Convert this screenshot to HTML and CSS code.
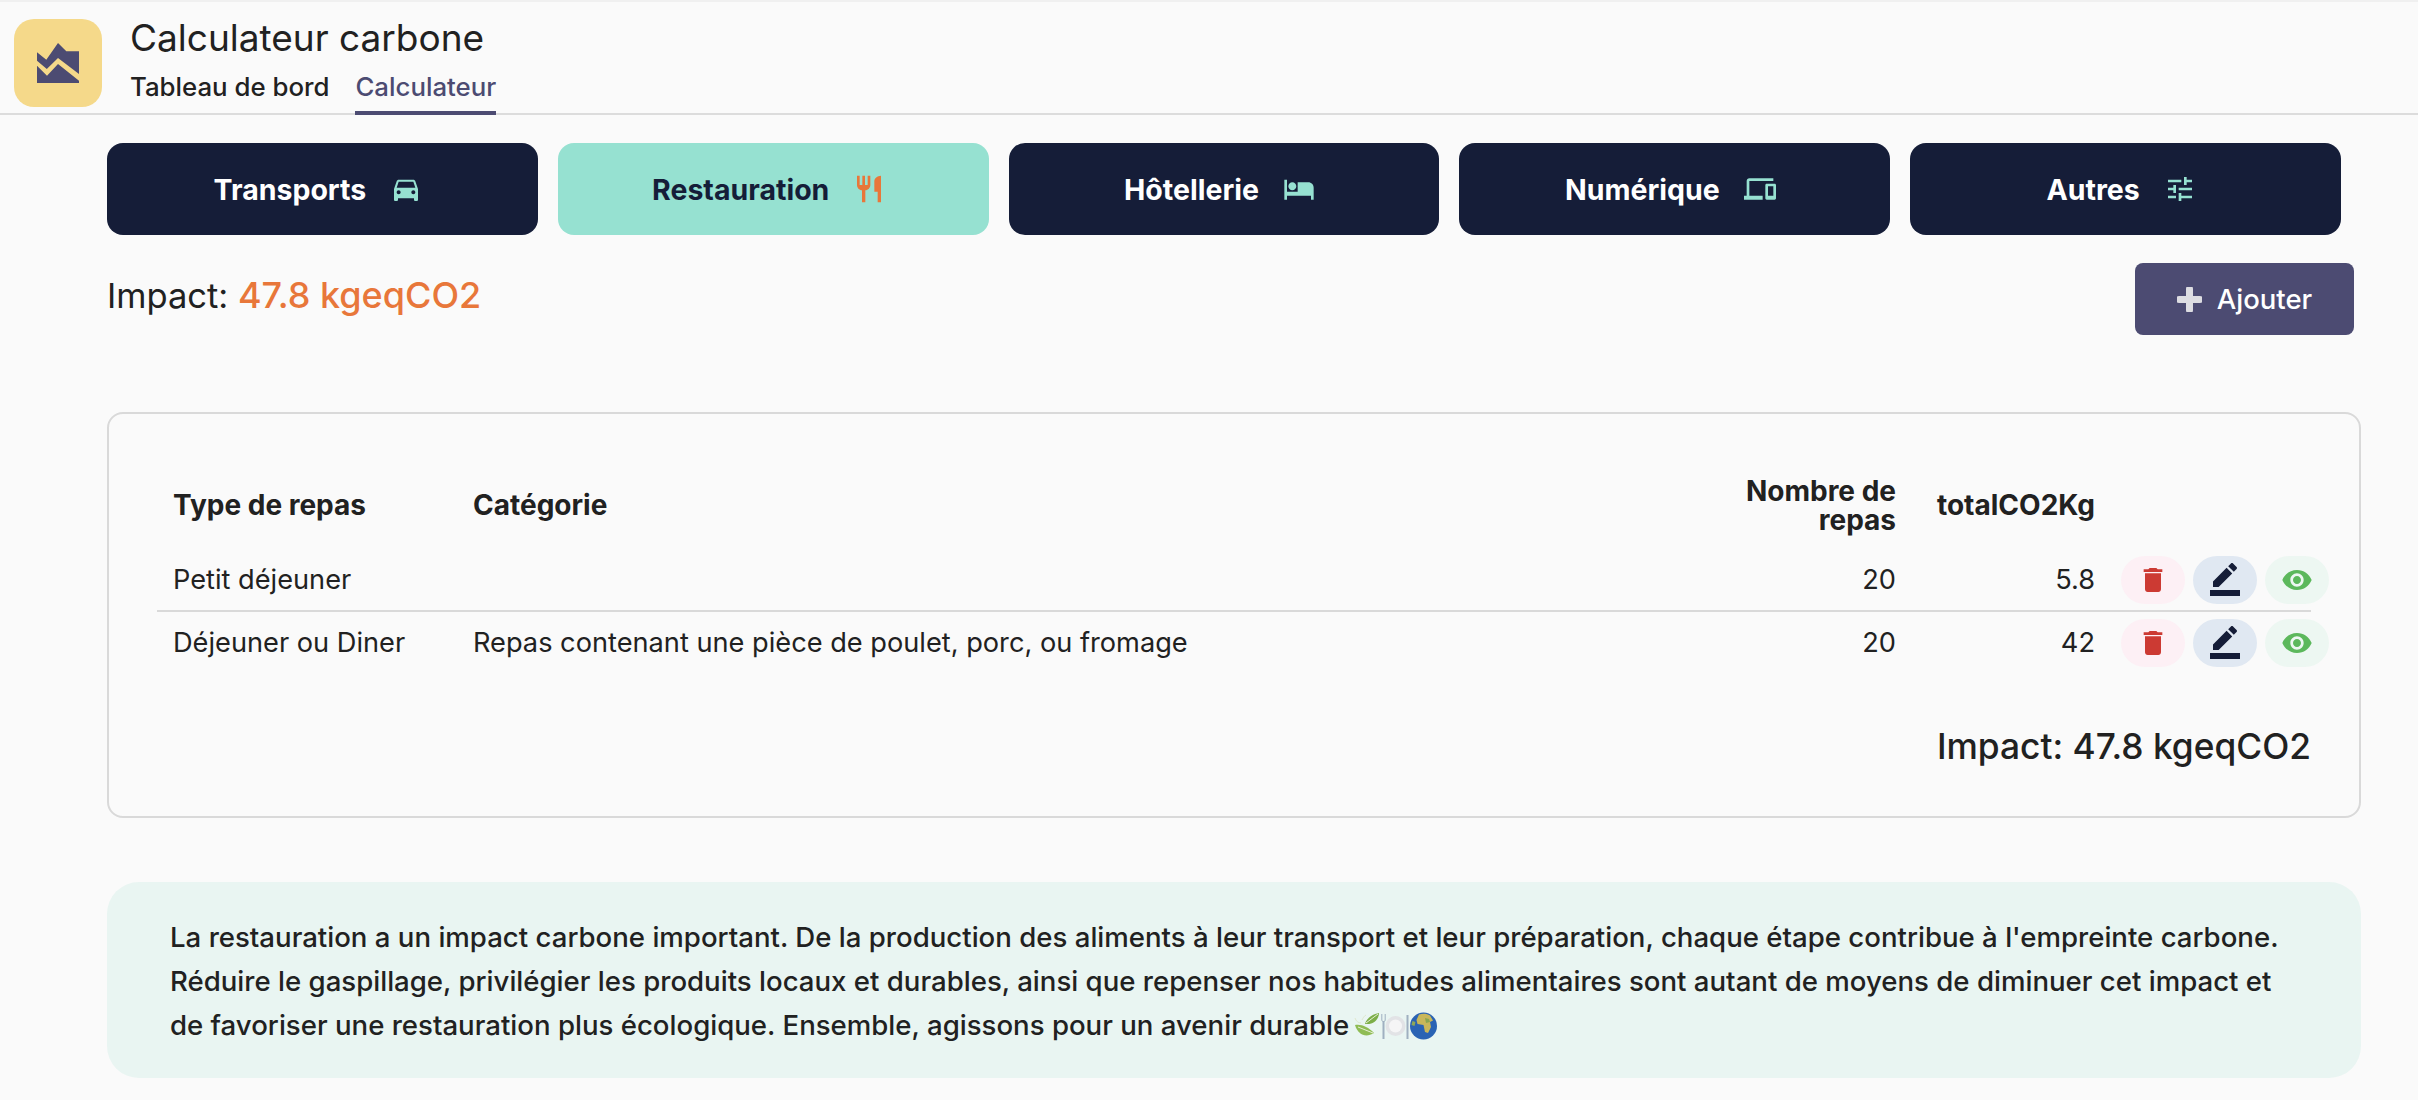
FILE: index.html
```html
<!DOCTYPE html>
<html lang="fr">
<head>
    <meta charset="UTF-8">
    <meta name="viewport" content="width=device-width, initial-scale=1.0">
    <title>Calculateur carbone</title>
    <link rel="stylesheet" href="styles.css">
</head>
<body>
    <header class="app-header">
        <div class="logo">
            <svg width="42" height="40" viewBox="0 0 42 40">
                <polygon class="logo-mark" points="0,9.300 9.300,16.700 21,0 29.300,8.300 42,8.300 42,31 21,15 9.800,26 0,17.700"/>
                <polygon class="logo-mark" points="0,22.700 10,32.700 21,21 42,37.700 42,40 0,40"/>
            </svg>
        </div>
        <div class="header-text">
            <h1>Calculateur carbone</h1>
            <nav class="header-nav">
                <a href="#">Tableau de bord</a>
                <a href="#" class="active">Calculateur</a>
            </nav>
        </div>
    </header>

    <main class="page">
        <div class="tabs">
            <button class="tab">Transports
                <svg class="tab-icon" viewBox="0 0 24 24"><path d="M18.92 6.01C18.72 5.42 18.16 5 17.5 5h-11c-.66 0-1.21.42-1.42 1.01L3 12v8c0 .55.45 1 1 1h1c.55 0 1-.45 1-1v-1h12v1c0 .55.45 1 1 1h1c.55 0 1-.45 1-1v-8l-2.08-5.99zM6.5 16c-.83 0-1.5-.67-1.5-1.5S5.67 13 6.5 13s1.5.67 1.5 1.5S7.33 16 6.5 16zm11 0c-.83 0-1.5-.67-1.5-1.5s.67-1.5 1.5-1.5 1.5.67 1.5 1.5-.67 1.5-1.5 1.5zM5 11l1.5-4.5h11L19 11H5z"/></svg>
            </button>
            <button class="tab active">Restauration
                <svg class="tab-icon" viewBox="0 0 24 24"><path d="M11 9H9V2H7v7H5V2H3v7c0 2.12 1.66 3.84 3.75 3.97V22h2.5v-9.03C11.34 12.84 13 11.12 13 9V2h-2v7zm5-3v8h2.5v8H21V2c-2.76 0-5 2.24-5 4z"/></svg>
            </button>
            <button class="tab">Hôtellerie
                <svg class="tab-icon" viewBox="0 0 24 24"><path d="M7 13c1.66 0 3-1.34 3-3S8.66 7 7 7s-3 1.34-3 3 1.34 3 3 3zm12-6h-8v7H3V5H1v15h2v-3h18v3h2v-9c0-2.21-1.79-4-4-4z"/></svg>
            </button>
            <button class="tab">Numérique
                <svg class="tab-icon" viewBox="0 0 24 24"><path d="M4 6h18V4H4c-1.1 0-2 .9-2 2v11H0v3h14v-3H4V6zm19 2h-6c-.55 0-1 .45-1 1v10c0 .55.45 1 1 1h6c.55 0 1-.45 1-1V9c0-.55-.45-1-1-1zm-1 9h-4v-7h4v7z"/></svg>
            </button>
            <button class="tab">Autres
                <svg class="tab-icon" viewBox="0 0 24 24"><path d="M3 17v2h6v-2H3zM3 5v2h10V5H3zm10 16v-2h8v-2h-8v-2h-2v6h2zM7 9v2H3v2h4v2h2V9H7zm14 4v-2H11v2h10zm-6-4h2V7h4V5h-4V3h-2v6z"/></svg>
            </button>
        </div>

        <div class="impact-row">
            <div class="impact">Impact: <span class="impact-value">47.8 kgeqCO2</span></div>
            <button class="add-btn">
                <svg width="25" height="25" viewBox="0 0 25 25"><path class="add-plus" d="M12.5 2v21M2 12.500h21"/></svg>
                Ajouter
            </button>
        </div>

        <section class="card">
            <table class="meals">
                <thead>
                    <tr>
                        <th class="col-type">Type de repas</th>
                        <th>Catégorie</th>
                        <th class="num col-count">Nombre de repas</th>
                        <th class="num col-total">totalCO2Kg</th>
                        <th class="col-actions"></th>
                    </tr>
                </thead>
                <tbody>
                    <tr>
                        <td>Petit déjeuner</td>
                        <td></td>
                        <td class="num">20</td>
                        <td class="num">5.8</td>
                        <td class="actions-cell">
                            <div class="actions">
                                <button class="icon-btn delete"><svg viewBox="0 0 24 24"><path d="M6 19c0 1.100.9 2 2 2h8c1.100 0 2-.9 2-2V7H6v12zM19 4h-3.500l-1-1h-5l-1 1H5v2h14V4z"/></svg></button>
                                <button class="icon-btn edit"><svg viewBox="0 0 24 24"><path d="M22 24H2v-4h20v4zM13.060 5.190l3.750 3.750L7.750 18H4v-3.750l9.060-9.060zm4.820 2.680-3.750-3.750 1.830-1.830c.39-.39 1.020-.39 1.410 0l2.340 2.340c.39.39.39 1.020 0 1.410l-1.830 1.830z"/></svg></button>
                                <button class="icon-btn view"><svg viewBox="0 0 24 24"><path d="M12 4.500C7 4.500 2.730 7.610 1 12c1.730 4.390 6 7.500 11 7.500s9.270-3.110 11-7.500c-1.730-4.390-6-7.500-11-7.500zM12 17c-2.760 0-5-2.240-5-5s2.240-5 5-5 5 2.240 5 5-2.240 5-5 5zm0-8c-1.660 0-3 1.340-3 3s1.340 3 3 3 3-1.340 3-3-1.340-3-3-3z"/></svg></button>
                            </div>
                        </td>
                    </tr>
                    <tr>
                        <td>Déjeuner ou Diner</td>
                        <td>Repas contenant une pièce de poulet, porc, ou fromage</td>
                        <td class="num">20</td>
                        <td class="num">42</td>
                        <td class="actions-cell">
                            <div class="actions">
                                <button class="icon-btn delete"><svg viewBox="0 0 24 24"><path d="M6 19c0 1.100.9 2 2 2h8c1.100 0 2-.9 2-2V7H6v12zM19 4h-3.500l-1-1h-5l-1 1H5v2h14V4z"/></svg></button>
                                <button class="icon-btn edit"><svg viewBox="0 0 24 24"><path d="M22 24H2v-4h20v4zM13.060 5.190l3.750 3.750L7.750 18H4v-3.750l9.060-9.060zm4.820 2.680-3.750-3.750 1.830-1.830c.39-.39 1.020-.39 1.410 0l2.340 2.340c.39.39.39 1.020 0 1.410l-1.830 1.830z"/></svg></button>
                                <button class="icon-btn view"><svg viewBox="0 0 24 24"><path d="M12 4.500C7 4.500 2.730 7.610 1 12c1.730 4.390 6 7.500 11 7.500s9.270-3.110 11-7.500c-1.730-4.390-6-7.500-11-7.500zM12 17c-2.760 0-5-2.240-5-5s2.240-5 5-5 5 2.240 5 5-2.240 5-5 5zm0-8c-1.660 0-3 1.340-3 3s1.340 3 3 3 3-1.340 3-3-1.340-3-3-3z"/></svg></button>
                            </div>
                        </td>
                    </tr>
                </tbody>
            </table>
            <div class="card-total">Impact: 47.8 kgeqCO2</div>
        </section>

        <section class="info">
            La restauration a un impact carbone important. De la production des aliments à leur transport et leur préparation, chaque étape contribue à l'empreinte carbone. Réduire le gaspillage, privilégier les produits locaux et durables, ainsi que repenser nos habitudes alimentaires sont autant de moyens de diminuer cet impact et de favoriser une restauration plus écologique. Ensemble, agissons pour un avenir durable
            <span class="emojis">
                <svg width="27" height="28" viewBox="0 0 27 28">
                    <path d="M11 12C12 7 18 2 25 1c0 6-5 12-14 11z" fill="#7cae48"/>
                    <path d="M1 13c7-1 13 2 19 8-8 5-16 2-19-8z" fill="#8fbc55"/>
                    <path d="M4 15l15 6M12 11L24 2" stroke="#e6efd4" stroke-width="1" fill="none"/>
                    <path d="M1 6c1 3 3 5 6 5M12 3c-2 1-3 3-4 5" stroke="#dfe8cf" stroke-width="1" fill="none"/>
                </svg>
                <svg width="29" height="28" viewBox="0 0 29 28">
                    <circle cx="14.500" cy="14" r="10" fill="#e2e3e6"/>
                    <circle cx="14.500" cy="14" r="6.500" fill="#f5f5f6"/>
                    <path d="M2.500 9v18M26.500 3v24" stroke="#9fb0c0" stroke-width="2" fill="none"/>
                    <path d="M0.800 2v6c0 2 3.400 2 3.400 0V2" stroke="#9fb0c0" stroke-width="1" fill="none"/>
                </svg>
                <svg width="27" height="28" viewBox="0 0 27 28">
                    <circle cx="13.500" cy="14" r="13.500" fill="#2a63b4"/>
                    <path d="M9 2.500c4-1.500 8-1 11 1l3 5-3 1.500 1 5-3 6-3-1-1.500-7-6-1-1-4z" fill="#c9b75a"/>
                    <path d="M2.500 9l3 1-1 4-3-1z" fill="#8ea858"/>
                    <path d="M15 6l4 1 1 3-4 1z" fill="#8aa650"/>
                </svg>
            </span>
        </section>
    </main>
</body>
</html>
```

FILE: styles.css
```css
* {
    margin: 0;
    padding: 0;
    box-sizing: border-box;
}

body {
    background: #fafafa;
    color: #212121;
    font-family: Inter, "Liberation Sans", sans-serif;
}

button {
    font-family: inherit;
    border: none;
    cursor: pointer;
}

.app-header {
    display: flex;
    align-items: flex-start;
    gap: 28px;
    height: 115px;
    padding: 19px 0 0 14px;
    border-top: 2px solid #f0f0f0;
    border-bottom: 2px solid #dcdcdc;
}

.logo {
    width: 88px;
    height: 88px;
    margin-top: -2px;
    border-radius: 20px;
    background: #f5d98a;
    display: flex;
    align-items: center;
    justify-content: center;
}

.logo-mark {
    fill: #4c4b72;
}

.header-text h1 {
    font-size: 37px;
    font-weight: 400;
    line-height: 44px;
    margin-top: -5px;
}

.header-nav {
    display: flex;
    gap: 26px;
    margin-top: 12px;
}

.header-nav a {
    font-size: 25.800px;
    font-weight: 500;
    line-height: 29px;
    padding-bottom: 10px;
    color: #212121;
    text-decoration: none;
}

.header-nav a.active {
    color: #4c4b72;
    border-bottom: 4px solid #4c4b72;
}

.page {
    padding: 28px 57px 0 107px;
}

.tabs {
    display: flex;
    gap: 20px;
    padding-right: 20px;
}

.tab {
    flex: 1;
    height: 92px;
    padding-right: 9px;
    border-radius: 16px;
    background: #151d38;
    color: #ffffff;
    font-size: 28.500px;
    font-weight: 700;
    display: flex;
    align-items: center;
    justify-content: center;
    gap: 24px;
}

.tab-icon {
    width: 32px;
    height: 32px;
    fill: #96e1d1;
}

.tab.active {
    background: #96e1d1;
    color: #151d38;
}

.tab.active .tab-icon {
    fill: #e8773a;
}

.impact-row {
    display: flex;
    justify-content: space-between;
    align-items: flex-start;
    padding-right: 7px;
    margin-top: 28px;
}

.impact {
    font-size: 34.500px;
    margin-top: 10px;
}

.impact-value {
    color: #e8773a;
    font-size: 36px;
    font-weight: 500;
}

.add-btn {
    width: 219px;
    height: 72px;
    border-radius: 8px;
    background: #4c4b72;
    color: #ffffff;
    font-size: 27.500px;
    font-weight: 500;
    display: flex;
    align-items: center;
    justify-content: center;
    gap: 15px;
}

.add-plus {
    stroke: #dddde2;
    stroke-width: 7;
    stroke-linecap: round;
    fill: none;
}

.card {
    height: 406px;
    margin-top: 77px;
    padding: 56px 48px 0 48px;
    border: 2px solid #d9d9d9;
    border-radius: 16px;
}

.meals {
    width: 100%;
    table-layout: fixed;
    border-collapse: collapse;
    font-size: 27.200px;
}

.meals th {
    font-size: 28px;
    font-weight: 700;
    text-align: left;
    line-height: 29px;
    padding: 0 16px 8px;
    height: 79px;
}

.meals td {
    padding: 0 16px;
    height: 62px;
}

.meals tbody tr:first-child {
    border-bottom: 2px solid #d9d9d9;
}

.meals .num {
    text-align: right;
}

.col-type { width: 300px; }
.col-count { width: 183px; }
.col-total { width: 199px; }
.col-actions { width: 200px; }

.meals .actions-cell {
    padding: 0 0 0 10px;
}

.actions {
    display: flex;
    gap: 8px;
    width: 208px;
}

.icon-btn {
    width: 64px;
    height: 48px;
    border-radius: 24px;
    display: flex;
    align-items: center;
    justify-content: center;
}

.icon-btn svg {
    width: 32px;
    height: 32px;
}

.icon-btn.edit svg {
    width: 36px;
    height: 36px;
    margin-bottom: 3px;
}

.delete { background: #fdf0f5; fill: #cc3a33; }
.edit { background: #e0e8f2; fill: #151d38; }
.view { background: #edf7f2; fill: #5cb85c; }

.card-total {
    text-align: right;
    font-size: 35.300px;
    font-weight: 500;
    margin-top: 52px;
}

.info {
    height: 196px;
    margin-top: 64px;
    padding: 33px 64px 33px 63px;
    border-radius: 32px;
    background: #e9f5f2;
    font-size: 27.600px;
    font-weight: 500;
    line-height: 44px;
}

.emojis {
    display: inline-flex;
    margin-left: -3px;
    vertical-align: -5px;
}
```
